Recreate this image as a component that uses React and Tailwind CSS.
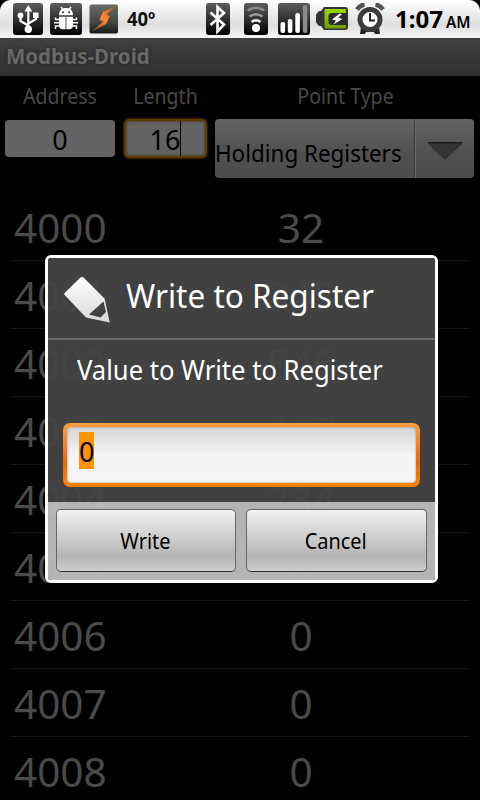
import React from "react";

const rows = [
  ["4000", "32"],
  ["4001", "345"],
  ["4002", "546"],
  ["4003", "467"],
  ["4004", "234"],
  ["4005", "16"],
  ["4006", "0"],
  ["4007", "0"],
  ["4008", "0"],
];

function IconTile({ className, children, w }) {
  return (
    <svg className={className} width={w} height="32" viewBox={`0 0 ${w} 32`}>
      <defs>
        <linearGradient id="tile" x1="0" y1="0" x2="0" y2="1">
          <stop offset="0" stopColor="#5c5c5c" />
          <stop offset="0.5" stopColor="#303030" />
          <stop offset="1" stopColor="#000" />
        </linearGradient>
      </defs>
      <rect x="0" y="0" width={w} height="32" rx="3" fill="url(#tile)" />
      {children}
    </svg>
  );
}

function StatusBar() {
  return (
    <div className="h-[38px] shrink-0 bg-black">
      <div className="flex h-full items-start rounded-t-[11px] bg-linear-to-b from-white via-[#dedede] via-65% to-[#f6f6f6] pt-[3px]">
        <IconTile w={30} className="ml-[13px]">
          <g fill="none" stroke="#fff" strokeWidth="2.2">
            <path d="M15.300 6v20M15.300 22.500l-7.800-4.500v-5M15.300 20.500l7.700-4.500v-3" />
          </g>
          <circle cx="15.300" cy="26.300" r="3.700" fill="#fff" />
          <path d="M15.300 2l4 6.500h-8z" fill="#fff" />
          <circle cx="7.500" cy="12.500" r="2.900" fill="#fff" />
          <rect x="20" y="9.500" width="5.500" height="5.500" fill="#fff" />
        </IconTile>
        <IconTile w={32} className="ml-[7px]">
          <g fill="#fff">
            <path d="M9 12.300c0-4.800 2.900-7.300 7-7.300s7 2.500 7 7.300z" />
            <path d="M9 13.800h6.600v12.400H13a4 4 0 0 1-4-4zM16.400 13.800H23v8.400a4 4 0 0 1-4 4h-2.600z" />
          </g>
          <path
            d="M12.800 6.500l-1.800-2.700M19.200 6.500l1.800-2.700M9 16.500H5.500v-2M9 19.800H4M9 23H5.500v3M23 16.500h3.500v-2M23 19.800h5M23 23h3.500v3"
            fill="none"
            stroke="#fff"
            strokeWidth="1.500"
          />
          <circle cx="13" cy="9.300" r="1" fill="#333" />
          <circle cx="19" cy="9.300" r="1" fill="#333" />
        </IconTile>
        <svg className="ml-[7px]" width="30" height="32" viewBox="0 0 30 32">
          <defs>
            <linearGradient id="task" x1="0" y1="0" x2="0" y2="1">
              <stop offset="0" stopColor="#686a66" />
              <stop offset="0.6" stopColor="#454842" />
              <stop offset="1" stopColor="#151a18" />
            </linearGradient>
            <linearGradient id="bolt" x1="0" y1="1" x2="1" y2="0">
              <stop offset="0" stopColor="#8f3d14" />
              <stop offset="0.5" stopColor="#ff8a32" />
              <stop offset="1" stopColor="#a8552c" />
            </linearGradient>
          </defs>
          <rect x="0.500" y="1.500" width="28.500" height="29" rx="2" fill="url(#task)" />
          <path d="M27 3l-13 5.500L10.500 17l3.500 1.500L3 28.500l14-7.500 4-8-3.500-1.500z" fill="url(#bolt)" />
        </svg>
        <span className="ml-[8px] mt-[4px] w-[28px] origin-left scale-x-[.97] text-[19px] font-bold leading-[24px] text-[#111]">40º</span>

        <IconTile w={24} className="ml-[51px]">
          <path d="M4.500 9.500l13.500 12-6.500 7V4l6.500 6-13.500 12" fill="none" stroke="#fff" strokeWidth="2.600" />
        </IconTile>
        <IconTile w={24} className="ml-[14px]">
          <circle cx="12" cy="25" r="4" fill="#fff" />
          <g fill="none" strokeWidth="2.600">
            <path d="M7.500 19q4.500-3.500 9 0" stroke="#fff" />
            <path d="M5.500 13.500q6.500-4.500 13 0" stroke="#999" />
            <path d="M3.500 7.500q8.500-5.500 17 0" stroke="#888" />
          </g>
        </IconTile>
        <IconTile w={32} className="ml-[10px]">
          <g fill="#fff">
            <rect x="2.500" y="19" width="4.600" height="11" rx="2" />
            <rect x="9.800" y="16" width="4.600" height="14" rx="2" />
            <rect x="17.300" y="10" width="4.600" height="20" rx="2" />
          </g>
          <rect x="24.800" y="2" width="4.600" height="28" rx="2" fill="#8a8a8a" />
        </IconTile>
        <svg className="ml-[6px]" width="32" height="32" viewBox="0 0 32 32">
          <defs>
            <linearGradient id="green" x1="0" y1="0" x2="0" y2="1">
              <stop offset="0" stopColor="#9bd900" />
              <stop offset="1" stopColor="#6f9c00" />
            </linearGradient>
          </defs>
          <path d="M8 4h21a3 3 0 0 1 3 3v17a3 3 0 0 1-3 3H8l-3-4H3l-3-3.500v-8L3 8h2z" fill="#333" />
          <rect x="8.500" y="6" width="21.500" height="19.500" rx="1" fill="url(#green)" />
          <path d="M15.500 10H31v12H15.500a3 3 0 0 1-3-3v-6a3 3 0 0 1 3-3z" fill="#2c2c2c" />
          <path d="M23.500 10.500l-7.500 6 4 1-2.500 4 9-5.500-4.500-1.200 4-3.500z" fill="#fff" />
        </svg>
        <svg className="ml-[7px]" width="30" height="32" viewBox="0 0 30 32">
          <path d="M2 6.500q2.500-4 7.500-5M28 6.500q-2.500-4-7.500-5" fill="none" stroke="#555" strokeWidth="4.500" />
          <path d="M5 31l1-7h18l1 7h-5l-1-2h-8l-1 2z" fill="#222" />
          <circle cx="15" cy="16.500" r="10" fill="#fff" stroke="#3c3c3c" strokeWidth="5" />
          <path d="M15 10v7.500h5" fill="none" stroke="#222" strokeWidth="2" />
        </svg>
        <span className="ml-[10px] flex w-[76px] items-baseline whitespace-nowrap font-bold text-black">
          <span className="text-[24px] leading-[32px]">1:07</span>
          <span className="ml-[3px] inline-block origin-left scale-x-[.93] text-[16.500px] font-semibold leading-[32px]">AM</span>
        </span>
      </div>
    </div>
  );
}

function PointTypeSelect() {
  return (
    <div className="mt-[-1px] ml-[8px] flex h-[59px] w-[259px] overflow-hidden rounded-[4px] bg-linear-to-b from-[#626262] via-[#505050] via-60% to-[#4c4c4c]">
      <div className="flex w-[200px] items-end border-r border-[#3d3d3d] pb-[9px]">
        <span className="origin-left scale-x-[.934] whitespace-nowrap text-[24px] leading-[32px] text-black">Holding Registers</span>
      </div>
      <div className="flex grow items-center justify-center border-l border-[#666] pt-[5px]">
        <svg width="34" height="20" viewBox="0 0 34 20">
          <path d="M0 1h34v2L17 19 0 3z" fill="#343434" />
          <path d="M0 1h34v1.500H0z" fill="#1c1c1c" />
        </svg>
      </div>
    </div>
  );
}

function DialogButton({ children, className }) {
  return (
    <button
      className={`flex h-[63px] items-center justify-center rounded-[5px] border border-[#666] border-b-[#333] bg-linear-to-b from-[#f3f3f3] via-[#b5b5b5] via-75% to-[#cfcfcf] pt-[2px] text-[21px] text-black ${className}`}
    >
      {children}
    </button>
  );
}

function WriteDialog() {
  return (
    <div className="absolute left-[45px] top-[255px] flex h-[328px] w-[393px] flex-col overflow-hidden rounded-[6px] border-[3px] border-white">
      <div className="flex h-[244px] flex-col bg-[#454545]/95">
        <div className="flex h-[82px] shrink-0 items-start border-b-2 border-[#6b6b6b]">
          <svg className="ml-[16px] mt-[18px]" width="47" height="48" viewBox="0 0 47 48">
            <defs>
              <linearGradient id="pencil" x1="0" y1="0" x2="0" y2="1">
                <stop offset="0" stopColor="#fff" />
                <stop offset="1" stopColor="#d8d8d8" />
              </linearGradient>
            </defs>
            <path
              fillRule="evenodd"
              d="M16.500 1.500q1.500-1 3 0L40.500 22.500 45.800 46.500 22 41.500 0.600 19q-.8-1 0-2zM39.500 25.500L25 38.500l11.500 3 5.500-5.500z"
              fill="url(#pencil)"
            />
          </svg>
          <h2 className="ml-[15px] mt-[16px] origin-left scale-x-[.954] whitespace-nowrap text-[33px] leading-[44px] text-white">Write to Register</h2>
        </div>
        <p className="ml-[29px] mt-[12px] origin-left scale-x-[.948] whitespace-nowrap text-[27px] leading-[36px] text-white">Value to Write to Register</p>
        <div className="ml-[15px] mt-[35px] h-[64px] w-[357px] rounded-[7px] bg-linear-to-b from-[#ff9e40] via-[#ee6700] via-60% to-[#ff8400] p-[4px]">
          <div className="h-full rounded-[4px] bg-linear-to-b from-[#d5d5d5] via-[#f4f4f4] via-50% to-[#f5f5f5] pl-[12px] pt-[5px] shadow-[inset_0_0_2px_#777]">
            <span className="block h-[37px] w-[15px] bg-[#ff9200] text-[27px] leading-[39px] text-black">0</span>
          </div>
        </div>
      </div>
      <div className="flex grow items-start bg-[#bbb]/96 pl-[8px] pt-[7px]">
        <DialogButton className="w-[180px]"><span className="mr-[2px] scale-x-[.95]">Write</span></DialogButton>
        <DialogButton className="ml-[10px] w-[181px]"><span className="mr-[1px] scale-x-[.95]">Cancel</span></DialogButton>
      </div>
    </div>
  );
}

export default function App() {
  return (
    <div className="relative flex h-[800px] w-[480px] flex-col overflow-hidden bg-black font-['Noto_Sans','Open_Sans',sans-serif]">
      <StatusBar />
      <div className="flex h-[38px] shrink-0 items-center bg-linear-to-b from-[#404040] to-[#303030] pb-[2px] pl-[6px]">
        <h1 className="origin-left scale-x-[.975] text-[21px] font-bold leading-[28px] text-[#686868] [text-shadow:0_0_4px_#222]">Modbus-Droid</h1>
      </div>
      <div className="flex h-[43px] shrink-0 pt-[6px] text-[21px] leading-[29px] text-[#484848]">
        <span className="w-[120px] scale-x-[.93] text-center">Address</span>
        <span className="w-[91px] scale-x-[.93] text-center">Length</span>
        <span className="w-[269px] scale-x-[.93] text-center">Point Type</span>
      </div>
      <div className="flex h-[74px] shrink-0 items-start pl-[5px] pt-[1px] text-[27px] text-black">
        <div className="flex h-[37px] w-[110px] items-center justify-center rounded-[4px] bg-[#636363] pt-[3px]">0</div>
        <div className="ml-[9px] mt-[-1px] flex h-[39px] w-[83px] items-center justify-center rounded-[5px] border-2 border-[#5c3a00] bg-[#636363] shadow-[0_0_2px_1px_#3a2500,inset_0_0_3px_#402c10]">
          <span className="h-[35px] border-r border-black leading-[37px]">16</span>
        </div>
        <PointTypeSelect />
      </div>
      <ul className="flex flex-col px-[10px]">
        {rows.map(([address, value]) => (
          <li key={address} className="flex h-[68px] shrink-0 items-center border-b border-[#161616] pt-[2px] text-[40.500px] leading-[54px] text-[#4a4a4a]">
            <span className="w-[200px] pl-[4px]">{address}</span>
            <span className="w-[182px] text-center">{value}</span>
          </li>
        ))}
      </ul>
      <WriteDialog />
    </div>
  );
}
